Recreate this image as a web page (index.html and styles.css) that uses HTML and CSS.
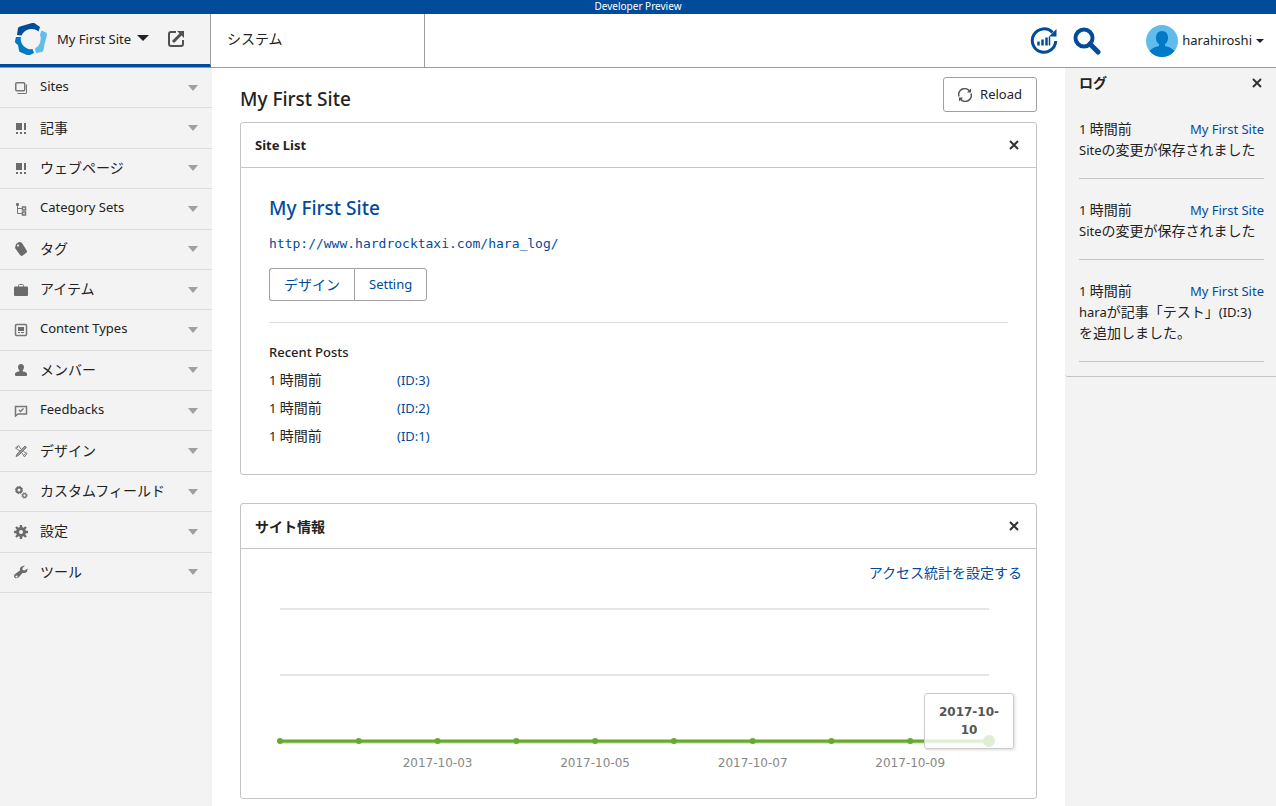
FILE: index.html
```
<!DOCTYPE html>
<html lang="en">

<head>
    <meta charset="UTF-8">
    <meta name="viewport" content="width=device-width, initial-scale=1.0">
    <title>My First Site</title>
    <link rel="stylesheet" href="styles.css">
</head>

<body>
    <div class="preview-bar">Developer Preview</div>
    <header class="header">
        <div class="site-tab">
            <svg class="logo" viewBox="0 0 32 32" stroke-linejoin="round">
                <path d="M2 12 3 5Q3.500 4 5 3.500L17 0Q19 -0.500 20 0.500L25 4 23.500 8.500A11 11 0 0 0 6.500 12.500Z" fill="#004c9b" />
                <path d="M26.500 7.500 31 9.500Q32 10 32 12L29.500 21 28.500 27Q28 28.500 27 29L21 30 20 25.500A11 11 0 0 0 25 11.500Z" fill="#60bcea" />
                <path d="M1 14 6 14A10 10 0 0 0 17.500 26L19 30 15 32Q13 32.500 12 32L5 29Q4 28.500 4 27.500L3 22 0.500 20Q0 19 0 18Z" fill="#0079c6" />
            </svg>
            <button type="button" class="site-select">My First Site <span class="caret big"></span></button>
            <a href="#" class="view-site" aria-label="View site">
                <svg viewBox="0 0 18 18" fill="none" stroke="#505050" stroke-width="2">
                    <path d="M9 2H4Q2 2 2 4V14Q2 16 4 16H14Q16 16 16 14V10" />
                    <path d="M6 12 14 4" stroke-width="3" />
                    <path d="M10 1H17V8Z" fill="#505050" stroke="none" />
                </svg>
            </a>
        </div>
        <a href="#" class="system-tab" lang="ja">システム</a>
        <div class="header-tools">
            <button type="button" class="tool" aria-label="Rebuild">
                <svg viewBox="0 0 28 28" fill="none" stroke="#004c9b" stroke-width="3">
                    <path d="M22.500 5.500A11.700 11.700 0 1 0 25.700 14" />
                    <path d="M26.500 2V9.500H19Z" fill="#004c9b" stroke="none" />
                    <path d="M8.500 18.500V14.500M12.500 18.500V12.500M16.500 18.500V10.500" stroke-width="2.500" />
                    <path d="M19.500 18.500V9.500" stroke-width="1.500" />
                </svg>
            </button>
            <button type="button" class="tool" aria-label="Search">
                <svg viewBox="0 0 28 28" fill="none" stroke="#004c9b">
                    <circle cx="11" cy="11" r="8.500" stroke-width="4" />
                    <path d="M17 17 25 25" stroke-width="5" stroke-linecap="round" />
                </svg>
            </button>
            <button type="button" class="user">
                <svg class="avatar" viewBox="0 0 32 32">
                    <circle cx="16" cy="16" r="16" fill="#60bcea" />
                    <path d="M16 6C12 6 10 9 10 13Q10 17 13 19V21Q7 22 3.500 26A16 16 0 0 0 28.500 26Q25 22 19 21V19Q22 17 22 13C22 9 20 6 16 6Z" fill="#0079c6" />
                </svg>
                harahiroshi <span class="caret"></span>
            </button>
        </div>
    </header>

    <div class="container">
        <nav class="sidebar">
            <ul>
                <li><a href="#">
                    <svg viewBox="0 0 14 14" fill="none" stroke="#777"><rect x="1.750" y="1.750" width="9" height="8" rx="1" stroke-width="1.500" /><path d="M3.500 12.500H12Q12.500 12.500 12.500 12V3.500" /></svg>
                    <span>Sites</span><i class="arrow"></i></a></li>
                <li><a href="#">
                    <svg viewBox="0 0 14 14" fill="#6b6b6b"><path d="M2 2H8V9H2ZM10 2H12V9H10ZM2 11H4V13H2ZM6 11H8V13H6ZM10 11H12V13H10Z" /></svg>
                    <span lang="ja">記事</span><i class="arrow"></i></a></li>
                <li><a href="#">
                    <svg viewBox="0 0 14 14" fill="#6b6b6b"><path d="M2 2H8V9H2ZM10 2H12V9H10ZM2 11H4V13H2ZM6 11H8V13H6ZM10 11H12V13H10Z" /></svg>
                    <span lang="ja">ウェブページ</span><i class="arrow"></i></a></li>
                <li><a href="#">
                    <svg viewBox="0 0 14 14" fill="none" stroke="#777"><path d="M2.500 1.500H4.500V3.500H2.500Z" fill="#777" /><path d="M3.500 4V11.500H8M3.500 6.500H8" /><path d="M8.500 5H11.500V8H8.500ZM8.500 10H11.500V13H8.500Z" stroke-width="1.500" /></svg>
                    <span>Category Sets</span><i class="arrow"></i></a></li>
                <li><a href="#">
                    <svg viewBox="0 0 14 14" fill="#6b6b6b"><path fill-rule="evenodd" d="M2 2 5 0Q7 0 8 1L13 9Q13 11 12 11L8 14Q7 14 6 13L1 6ZM4 2.500A1 1 0 1 0 4.100 2.500Z" /></svg>
                    <span lang="ja">タグ</span><i class="arrow"></i></a></li>
                <li><a href="#">
                    <svg viewBox="0 0 14 14" fill="#6b6b6b"><path d="M1 3.500H13Q14 3.500 14 4.500V12Q14 13 13 13H1Q0 13 0 12V4.500Q0 3.500 1 3.500Z" /><path d="M4.500 4V2.500Q4.500 1.500 5.500 1.500H8.500Q9.500 1.500 9.500 2.500V4" fill="none" stroke="#777" /></svg>
                    <span lang="ja">アイテム</span><i class="arrow"></i></a></li>
                <li><a href="#">
                    <svg viewBox="0 0 14 14" fill="none" stroke="#777" stroke-width="1.500"><rect x="1.500" y="1.500" width="11" height="11" rx="1" /><path d="M4 4H10V8H4ZM4 9H6V10H4ZM7 9H10V10H7Z" fill="#6b6b6b" stroke="none" /></svg>
                    <span>Content Types</span><i class="arrow"></i></a></li>
                <li><a href="#">
                    <svg viewBox="0 0 14 14" fill="#6b6b6b"><path d="M7 1C5 1 4 2.500 4 4Q4 6 5.500 7.500L5 8.500Q1 9 1 11V12Q1 13 2 13H12Q13 13 13 12V11Q13 9 9 8.500L8.500 7.500Q10 6 10 4C10 2.500 9 1 7 1Z" /></svg>
                    <span lang="ja">メンバー</span><i class="arrow"></i></a></li>
                <li><a href="#">
                    <svg viewBox="0 0 14 14" fill="none" stroke="#777" stroke-width="1.500"><path d="M1.500 12V2.500H12.500V10H4Z" /><path d="M5 6 6.500 7.500 9.500 4.500" /></svg>
                    <span>Feedbacks</span><i class="arrow"></i></a></li>
                <li><a href="#">
                    <svg viewBox="0 0 14 14" fill="none" stroke="#777"><path d="M2 12.500 3 10 11 2 12.500 3.500 4.500 11.500Z" fill="#999" /><path d="M6 7 1.500 4 4.500 1.500 7 5M8 9 10.500 13 13 9.500 9.500 7.500M3 4 4 3M10 11 11.500 9.500" /></svg>
                    <span lang="ja">デザイン</span><i class="arrow"></i></a></li>
                <li><a href="#">
                    <svg viewBox="0 0 14 14" fill="none" stroke="#6b6b6b"><circle cx="5" cy="5" r="2.500" stroke-width="2" /><circle cx="5" cy="5" r="3.600" stroke-dasharray="1.400 1.400" /><circle cx="10.500" cy="10.500" r="1.800" stroke-width="1.300" /><circle cx="10.500" cy="10.500" r="2.700" stroke-dasharray="1.060 1.060" /></svg>
                    <span lang="ja">カスタムフィールド</span><i class="arrow"></i></a></li>
                <li><a href="#">
                    <svg viewBox="0 0 14 14" fill="none" stroke="#6b6b6b"><circle cx="7" cy="7" r="3.500" stroke-width="3" /><path d="M7 0V3M7 11V14M0 7H3M11 7H14M2 2 4 4M10 10 12 12M12 2 10 4M4 10 2 12" stroke-width="2.400" /></svg>
                    <span lang="ja">設定</span><i class="arrow"></i></a></li>
                <li><a href="#">
                    <svg viewBox="0 0 14 14" fill="#6b6b6b"><path fill-rule="evenodd" d="M11 0.500 8.500 3V5L10.500 5.500 13.500 3.500Q14 7 11 8H8.500L5 12Q3 14 1 13Q-1 11 1 9L6 5.500Q5 1 11 0.500ZM2.500 10.500A1 1 0 1 0 2.600 10.500Z" /></svg>
                    <span lang="ja">ツール</span><i class="arrow"></i></a></li>
            </ul>
        </nav>

        <main class="main">
            <div class="page-title">
                <h1>My First Site</h1>
                <button type="button" class="reload">
                    <svg viewBox="0 0 14 14" fill="none" stroke="#555" stroke-width="1.500">
                        <path d="M1 8.500A6 6 0 0 1 11.500 3M13 5.500A6 6 0 0 1 2.500 11" />
                        <path d="M13 0.500V4.500H9ZM1 13.500V9.500H5Z" fill="#555" stroke="none" />
                    </svg>
                    Reload
                </button>
            </div>

            <section class="widget">
                <div class="widget-header">
                    <h2>Site List</h2>
                    <button type="button" class="close" aria-label="Close"><svg viewBox="0 0 10 10"><path d="M1 1 9 9M9 1 1 9" /></svg></button>
                </div>
                <div class="site-list">
                    <h3><a href="#">My First Site</a></h3>
                    <p class="site-url"><a href="#">http://www.hardrocktaxi.com/hara_log/</a></p>
                    <div class="btn-group">
                        <button type="button" lang="ja">デザイン</button>
                        <button type="button">Setting</button>
                    </div>
                    <hr>
                    <h4>Recent Posts</h4>
                    <table class="posts">
                        <tr><td>1 <span lang="ja">時間前</span></td><td><a href="#">(ID:3)</a></td></tr>
                        <tr><td>1 <span lang="ja">時間前</span></td><td><a href="#">(ID:2)</a></td></tr>
                        <tr><td>1 <span lang="ja">時間前</span></td><td><a href="#">(ID:1)</a></td></tr>
                    </table>
                </div>
            </section>

            <section class="widget">
                <div class="widget-header">
                    <h2 lang="ja">サイト情報</h2>
                    <button type="button" class="close" aria-label="Close"><svg viewBox="0 0 10 10"><path d="M1 1 9 9M9 1 1 9" /></svg></button>
                </div>
                <div class="site-info">
                    <p class="stats-link"><a href="#" lang="ja">アクセス統計を設定する</a></p>
                    <div class="chart">
                        <svg>
                            <g stroke="#e6e6e6" stroke-width="2">
                                <line x1="0" y1="9" x2="100%" y2="9" />
                                <line x1="0" y1="75" x2="100%" y2="75" />
                            </g>
                            <line x1="0" y1="142" x2="100%" y2="142" stroke="#b5d795" stroke-width="3" />
                            <line x1="0" y1="141" x2="100%" y2="141" stroke="#67a92f" stroke-width="3" />
                            <g fill="#67a92f">
                                <circle cx="0" cy="141" r="3" />
                                <circle cx="11.111%" cy="141" r="3" />
                                <circle cx="22.222%" cy="141" r="3" />
                                <circle cx="33.333%" cy="141" r="3" />
                                <circle cx="44.444%" cy="141" r="3" />
                                <circle cx="55.556%" cy="141" r="3" />
                                <circle cx="66.667%" cy="141" r="3" />
                                <circle cx="77.778%" cy="141" r="3" />
                                <circle cx="88.889%" cy="141" r="3" />
                                <circle cx="100%" cy="141" r="6" />
                            </g>
                            <g class="labels">
                                <text x="22.222%" y="167">2017-10-03</text>
                                <text x="44.444%" y="167">2017-10-05</text>
                                <text x="66.667%" y="167">2017-10-07</text>
                                <text x="88.889%" y="167">2017-10-09</text>
                            </g>
                        </svg>
                        <div class="tooltip">2017-10-10</div>
                    </div>
                </div>
            </section>
        </main>

        <aside class="side">
            <div class="log">
                <div class="log-header">
                    <h2 lang="ja">ログ</h2>
                    <button type="button" class="close" aria-label="Close"><svg viewBox="0 0 10 10"><path d="M1 1 9 9M9 1 1 9" /></svg></button>
                </div>
                <ul>
                    <li>
                        <div class="log-meta"><span>1 <span lang="ja">時間前</span></span><a href="#">My First Site</a></div>
                        <p>Site<span lang="ja">の変更が保存されました</span></p>
                    </li>
                    <li>
                        <div class="log-meta"><span>1 <span lang="ja">時間前</span></span><a href="#">My First Site</a></div>
                        <p>Site<span lang="ja">の変更が保存されました</span></p>
                    </li>
                    <li>
                        <div class="log-meta"><span>1 <span lang="ja">時間前</span></span><a href="#">My First Site</a></div>
                        <p>hara<span lang="ja">が記事「テスト」</span>(ID:3)<span lang="ja">を追加しました。</span></p>
                    </li>
                </ul>
            </div>
        </aside>
    </div>
</body>

</html>
```
FILE: styles.css
```
* {
    box-sizing: border-box;
}

body {
    display: flex;
    flex-direction: column;
    min-height: 100vh;
    margin: 0;
    font-family: "Noto Sans", "Noto Sans CJK JP", sans-serif;
    font-size: 13px;
    line-height: 21px;
    color: #222;
    background-color: #fff;
}

/* kanji and kana run a size larger than the latin text */
[lang="ja"] {
    font-family: "Noto Sans CJK JP", sans-serif;
    font-size: 14px;
}

/* keeps mixed lines at the height of the latin ones */
p [lang="ja"],
td [lang="ja"],
.log-meta [lang="ja"] {
    line-height: 1;
}

h1, h2, h3, h4, p, ul {
    margin: 0;
    padding: 0;
    font-weight: normal;
}

ul {
    list-style: none;
}

a {
    color: #004c9b;
    text-decoration: none;
}

button {
    padding: 0;
    border: 0;
    background: none;
    font-family: inherit;
    font-size: 13px;
    line-height: 21px;
    color: #222;
}

svg {
    display: block;
    flex: none;
}

.preview-bar {
    height: 14px;
    background-color: #004c9b;
    color: #fff;
    font-size: 10px;
    line-height: 13px;
    text-align: center;
}

/* header */
.header {
    display: flex;
    height: 54px;
    border-bottom: 1px solid #9c9c9c;
}

.site-tab {
    display: flex;
    align-items: center;
    width: 211px;
    padding-left: 15px;
    border-right: 1px solid #9c9c9c;
    border-bottom: 3px solid #004c9b;
    background-color: #f3f3f3;
}

.logo {
    width: 32px;
    height: 32px;
}

.site-select {
    display: flex;
    gap: 6px;
    margin-left: 10px;
}

.caret {
    width: 0;
    border: 4px solid transparent;
    border-top-color: #222;
    border-bottom: 0;
    align-self: center;
}

.caret.big {
    border-width: 6px 6px 0;
    margin-bottom: 3px;
}

.view-site {
    margin-left: 18px;
}

.view-site svg {
    width: 18px;
    height: 18px;
}

.system-tab {
    width: 214px;
    padding: 14px 16px;
    border-right: 1px solid #9c9c9c;
    color: #222;
}

.header-tools {
    display: flex;
    align-items: center;
    margin-left: auto;
    padding-right: 12px;
}

.tool {
    margin-right: 15px;
}

.tool svg {
    width: 28px;
    height: 28px;
}

.user {
    display: flex;
    align-items: center;
    gap: 4px;
    margin-left: 30px;
}

.avatar {
    width: 32px;
    height: 32px;
}

/* columns */
.container {
    display: flex;
    flex: 1;
}

.sidebar {
    width: 212px;
    background-color: #f3f3f3;
}

.sidebar ul {
    display: grid;
    grid-auto-rows: 1fr;
    height: 525px;
}

.sidebar a {
    display: flex;
    align-items: center;
    height: 100%;
    padding: 0 14px;
    border-bottom: 1px solid #dcdcdc;
    color: #222;
}

.sidebar svg {
    width: 14px;
    height: 14px;
    margin-right: 12px;
}

.sidebar span {
    line-height: 20px;
    margin-bottom: 3px;
}

.arrow {
    margin-left: auto;
    border: 5px solid transparent;
    border-top: 6px solid #a0a0a0;
    border-bottom: 0;
}

.main {
    flex: 1;
    padding: 9px 28px 0;
}

.page-title {
    display: flex;
    justify-content: space-between;
    margin-bottom: 10px;
}

.page-title h1 {
    padding-top: 8px;
    font-size: 19px;
    font-weight: 500;
    line-height: 28px;
}

.reload {
    display: flex;
    align-items: center;
    gap: 8px;
    height: 35px;
    padding: 0 14px;
    border: 1px solid #a0a0a0;
    border-radius: 3px;
}

.reload svg {
    width: 14px;
    height: 14px;
}

/* widgets */
.widget {
    margin-bottom: 28px;
    border: 1px solid #c4c4c4;
    border-radius: 3px;
}

.widget:last-child {
    margin-bottom: 0;
}

.page-title + .widget {
    margin-top: -1px;
}

.widget-header {
    display: flex;
    align-items: center;
    justify-content: space-between;
    height: 45px;
    padding: 0 17px 0 14px;
    border-bottom: 1px solid #c4c4c4;
}

.widget-header h2,
.log-header h2 {
    font-size: 13px;
    font-weight: bold;
}

.widget-header h2[lang="ja"],
.log-header h2[lang="ja"] {
    font-size: 14px;
}

.close svg {
    width: 10px;
    height: 10px;
    stroke: #333;
    stroke-width: 2;
}

.site-list {
    padding: 25px 28px 24px;
}

.site-list h3 {
    font-size: 19px;
    font-weight: 500;
    line-height: 30px;
}

.site-url {
    margin-top: 10px;
    font-family: "DejaVu Sans Mono", monospace;
}

.btn-group {
    display: flex;
    margin-top: 14px;
}

.btn-group button {
    height: 33px;
    padding: 0 14px;
    border: 1px solid #a0a0a0;
    color: #004c9b;
}

.btn-group button:first-child {
    border-right: 0;
    border-radius: 3px 0 0 3px;
}

.btn-group button:last-child {
    border-radius: 0 3px 3px 0;
}

.site-list hr {
    margin: 21px 0 15px;
    border: 0;
    border-top: 1px solid #dcdcdc;
}

.site-list h4 {
    font-size: 13px;
    font-weight: 500;
    line-height: 28px;
}

.posts {
    border-collapse: collapse;
}

.posts td {
    height: 28px;
    padding: 0;
}

.posts td:first-child {
    width: 128px;
}

.site-info {
    padding: 14px 14px 28px;
}

.stats-link {
    text-align: right;
}

.chart {
    position: relative;
    margin: 16px 33px 0 25px;
}

.chart svg {
    width: 100%;
    height: 170px;
    overflow: visible;
}

.chart .labels {
    fill: #888;
    font-family: "DejaVu Sans", sans-serif;
    font-size: 12px;
    text-anchor: middle;
}

.tooltip {
    position: absolute;
    top: 93px;
    right: -25px;
    width: 90px;
    padding: 9px;
    border: 1px solid #ccc;
    border-radius: 3px;
    background-color: rgba(255, 255, 255, 0.8);
    box-shadow: 1px 1px 3px rgba(0, 0, 0, 0.15);
    color: #555;
    font-family: "DejaVu Sans", sans-serif;
    font-size: 12px;
    font-weight: bold;
    line-height: 18px;
    text-align: center;
}

/* log */
.side {
    width: 211px;
    background-color: #f3f3f3;
}

.log {
    padding: 4px 12px 14px 14px;
    border-bottom: 1px solid #c4c4c4;
    border-radius: 0 0 0 3px;
}

.log-header {
    display: flex;
    align-items: center;
    justify-content: space-between;
    padding-right: 2px;
    margin-bottom: 26px;
}

.log li {
    margin-bottom: 21px;
    padding-bottom: 17px;
    border-bottom: 1px solid #c4c4c4;
}

.log li:last-child {
    margin-bottom: 0;
}

.log-meta {
    display: flex;
    justify-content: space-between;
}
```
